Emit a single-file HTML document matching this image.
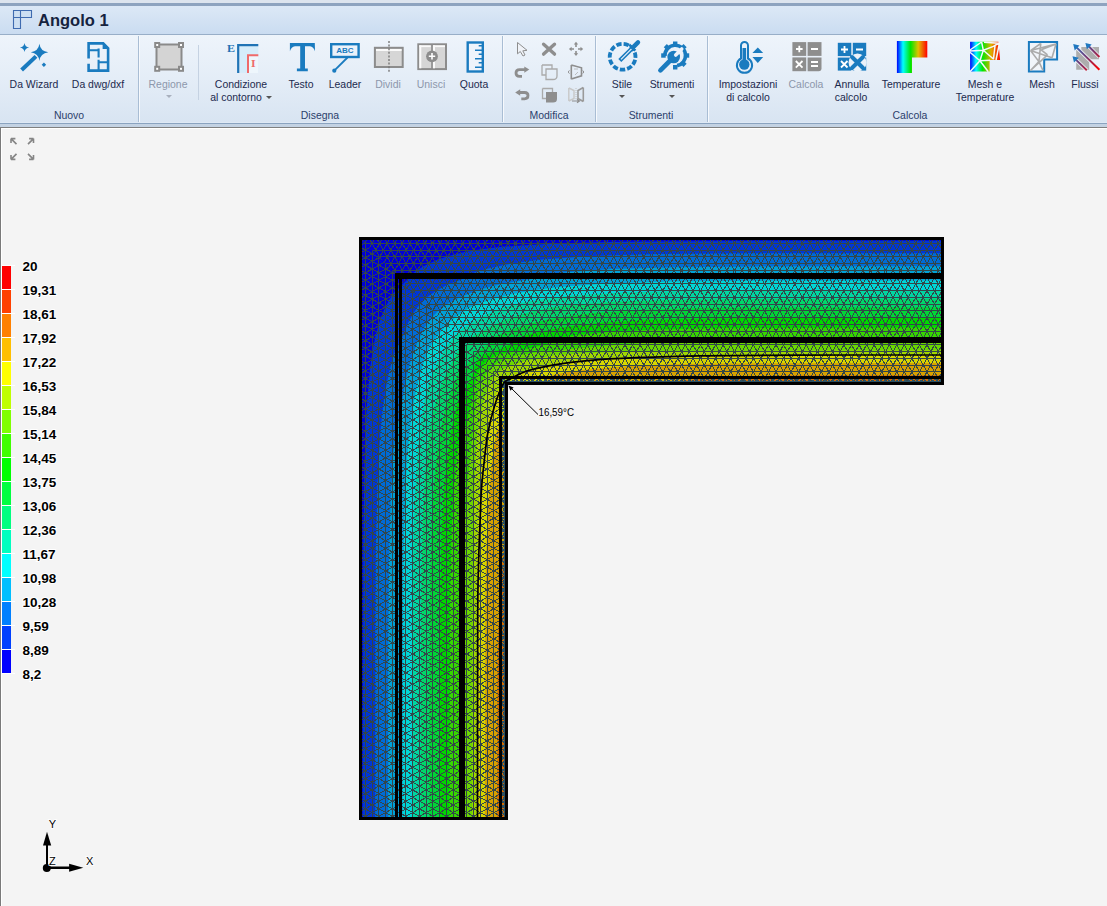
<!DOCTYPE html>
<html><head><meta charset="utf-8">
<style>
*{margin:0;padding:0;box-sizing:border-box}
html,body{width:1107px;height:906px;overflow:hidden;background:#f4f4f4;font-family:"Liberation Sans",sans-serif}
#top{position:absolute;left:0;top:0;width:1107px;height:3px;background:#dde4ee}
#tline{position:absolute;left:0;top:3px;width:1107px;height:3px;background:#8ea3bf}
#title{position:absolute;left:0;top:6px;width:1107px;height:28px;background:linear-gradient(#dce8f6,#cadcf1)}
#tline2{position:absolute;left:0;top:34px;width:1107px;height:1px;background:#98aec8}
#ttext{position:absolute;left:38px;top:11.4px;font-size:16.5px;font-weight:bold;color:#15233f;white-space:nowrap}
#ribbon{position:absolute;left:0;top:35px;width:1107px;height:88px;background:linear-gradient(#eef4fb 0%,#e4edf7 50%,#d8e4f2 100%)}
#rb1{position:absolute;left:0;top:122px;width:1107px;height:1px;background:#dfe9f5}
#rb2{position:absolute;left:0;top:123px;width:1107px;height:1px;background:#8aa3c0}
#rb3{position:absolute;left:0;top:124px;width:1107px;height:3px;background:#c3d2e3}
#rb4{position:absolute;left:0;top:127px;width:1107px;height:1px;background:#7f7f7f}
#rb5{position:absolute;left:1px;top:128px;width:1106px;height:1px;background:#ffffff}
#lb{position:absolute;left:0;top:128px;width:1px;height:778px;background:#7a7a7a}
#lb2{position:absolute;left:1px;top:128px;width:1px;height:778px;background:#fff}
.sep{position:absolute;top:36px;width:1px;height:86px;background:#a9bdd4}
.sep2{position:absolute;top:36px;width:1px;height:86px;background:#f6f9fd}
.lbl{position:absolute;font-size:11px;color:#1c2a4e;white-space:nowrap;text-align:center;line-height:13px;transform:scaleX(0.95)}
.dis{color:#8d97ab}
.grp{position:absolute;top:109px;font-size:11px;color:#2b3e6b;white-space:nowrap;text-align:center;line-height:13px;transform:scaleX(0.95)}
.arr{position:absolute;width:0;height:0;border-left:3px solid transparent;border-right:3px solid transparent;border-top:3px solid #555}
svg{position:absolute;left:0;top:0}
.leg{position:absolute;left:22px;font-size:13.5px;font-weight:bold;color:#000;white-space:nowrap;line-height:14px;text-shadow:0 0 1px #fff,0 0 1px #fff}
</style></head><body>
<div id="top"></div><div id="tline"></div><div id="title"></div><div id="tline2"></div>
<div id="ttext">Angolo 1</div>
<svg width="40" height="34" style="left:0;top:0">
<path d="M13.5 10.5H31.5V17.5H20.5V28.5H13.5Z M20.5 10.5V17.5H13.5" fill="#cddff2" stroke="#3f6bb0" stroke-width="1.1"/>
</svg>
<div id="ribbon"></div><div id="rb1"></div><div id="rb2"></div><div id="rb3"></div><div id="rb4"></div><div id="rb5"></div>
<div id="lb"></div><div id="lb2"></div>
<div class="sep" style="left:138px"></div><div class="sep2" style="left:139px"></div>
<div class="sep" style="left:502px"></div><div class="sep2" style="left:503px"></div>
<div class="sep" style="left:595px"></div><div class="sep2" style="left:596px"></div>
<div class="sep" style="left:707px"></div><div class="sep2" style="left:708px"></div>
<div style="position:absolute;left:198px;top:45px;width:1px;height:55px;background:#c5d2e2"></div>
<div class="lbl" style="left:-16px;top:78px;width:100px">Da Wizard</div>
<div class="lbl" style="left:48px;top:78px;width:100px">Da dwg/dxf</div>
<div class="lbl dis" style="left:118px;top:78px;width:100px">Regione</div>
<div class="arr" style="left:166px;top:95px;border-top-color:#a8b0bd"></div>
<div class="lbl" style="left:191px;top:78px;width:100px">Condizione</div>
<div class="lbl" style="left:186px;top:91px;width:100px">al contorno</div>
<div class="arr" style="left:266px;top:96px"></div>
<div class="lbl" style="left:251px;top:78px;width:100px">Testo</div>
<div class="lbl" style="left:295px;top:78px;width:100px">Leader</div>
<div class="lbl dis" style="left:338px;top:78px;width:100px">Dividi</div>
<div class="lbl dis" style="left:381px;top:78px;width:100px">Unisci</div>
<div class="lbl" style="left:424px;top:78px;width:100px">Quota</div>
<div class="lbl" style="left:572px;top:78px;width:100px">Stile</div>
<div class="arr" style="left:619px;top:95px"></div>
<div class="lbl" style="left:622px;top:78px;width:100px">Strumenti</div>
<div class="arr" style="left:669px;top:95px"></div>
<div class="lbl" style="left:698px;top:78px;width:100px">Impostazioni</div>
<div class="lbl" style="left:698px;top:91px;width:100px">di calcolo</div>
<div class="lbl dis" style="left:756px;top:78px;width:100px">Calcola</div>
<div class="lbl" style="left:802px;top:78px;width:100px">Annulla</div>
<div class="lbl" style="left:801px;top:91px;width:100px">calcolo</div>
<div class="lbl" style="left:861px;top:78px;width:100px">Temperature</div>
<div class="lbl" style="left:935px;top:78px;width:100px">Mesh e</div>
<div class="lbl" style="left:935px;top:91px;width:100px">Temperature</div>
<div class="lbl" style="left:992px;top:78px;width:100px">Mesh</div>
<div class="lbl" style="left:1035px;top:78px;width:100px">Flussi</div>
<div class="grp" style="left:19px;width:100px">Nuovo</div>
<div class="grp" style="left:270px;width:100px">Disegna</div>
<div class="grp" style="left:499px;width:100px">Modifica</div>
<div class="grp" style="left:601px;width:100px">Strumenti</div>
<div class="grp" style="left:860px;width:100px">Calcola</div>
<svg width="1107" height="128" style="left:0;top:0">
<defs>
<linearGradient id="tg" x1="0" x2="1" y1="0" y2="0">
<stop offset="0" stop-color="#0000ff"/><stop offset="0.2" stop-color="#00ffff"/><stop offset="0.45" stop-color="#00e600"/><stop offset="0.7" stop-color="#e0c000"/><stop offset="1" stop-color="#ff0000"/>
</linearGradient>
<linearGradient id="tg2" x1="0" x2="1" y1="0" y2="0">
<stop offset="0" stop-color="#0000ff"/><stop offset="0.2" stop-color="#00ffff"/><stop offset="0.42" stop-color="#00e600"/><stop offset="0.7" stop-color="#e0b000"/><stop offset="1" stop-color="#ff0000"/>
</linearGradient>
<linearGradient id="fg" gradientUnits="userSpaceOnUse" x1="1074" y1="46" x2="1099" y2="70">
<stop offset="0" stop-color="#2f6fc0"/><stop offset="0.5" stop-color="#7a3a70"/><stop offset="1" stop-color="#ff0000"/>
</linearGradient>
</defs>
<g fill="#1a7bbf">
<!-- wand -->
<g fill="#1a7bbf">
<path d="M39.4 43.8Q40.3 51.2 48.3 52.2Q40.3 53.2 39.4 61Q38.5 53.2 30.8 52.2Q38.5 51.2 39.4 43.8Z"/>
<path d="M24.5 43Q25.1 47 29.1 47.5Q25.1 48 24.5 52Q23.9 48 19.9 47.5Q23.9 47 24.5 43Z"/>
<path d="M43.9 62.6L46.1 64.8L43.9 67L41.7 64.8Z"/>
<path d="M20.2 68.6L34.6 55L37.4 57.8L23 71.4Z"/>
</g>
<!-- dwg -->
<g fill="none" stroke="#1a7bbf" stroke-width="2.6">
<path d="M88.6 58.5V43.4H103.2L108.1 48.3V70.6H88.6V63.8"/>
<path d="M88.6 50.2H99.6M98.6 48.6V57.6M98.6 59.8V70M98.6 62.2H108" stroke-width="2.1"/>
</g>
<path d="M102.6 42.1L109.4 48.9H102.6Z" fill="#1a7bbf"/>
<!-- regione -->
<rect x="156.5" y="44.5" width="25" height="25" fill="#d4d4d4" stroke="#8a8a8a" stroke-width="2"/>
<g fill="#fff" stroke="#8a8a8a" stroke-width="2">
<rect x="155.2" y="43" width="4" height="4"/><rect x="179" y="43" width="4" height="4"/>
<rect x="155.2" y="66.8" width="4" height="4"/><rect x="179" y="66.8" width="4" height="4"/>
</g>
<!-- condizione -->
<rect x="239.3" y="46.3" width="19" height="26.6" fill="#d5ecfa"/>
<rect x="249" y="56" width="9.3" height="17" fill="#eef6fc"/>
<path d="M238.2 72.9V45.2H258.3" fill="none" stroke="#1f73b5" stroke-width="2.2"/>
<path d="M248 72.9V55.2H258.3" fill="none" stroke="#ef6a6a" stroke-width="2"/>
<text x="226.9" y="51.8" font-family="Liberation Serif" font-weight="bold" font-size="11" textLength="8" lengthAdjust="spacingAndGlyphs" fill="#1f73b5">E</text>
<text x="250.9" y="66.9" font-family="Liberation Serif" font-weight="bold" font-size="10.5" textLength="4.6" lengthAdjust="spacingAndGlyphs" fill="#ef6a6a">I</text>
<!-- T -->
<path fill="#1a7bbf" d="M289.9 43H314.8L315 51.2Q313.5 46.8 310 46.3H305V68.5H307.8V71.2H296.9V68.5H300.2V46.3H295Q291.3 46.8 289.9 51.2Z"/>
<!-- leader -->
<rect x="331.2" y="44.2" width="27.4" height="12.8" fill="none" stroke="#1a7bbf" stroke-width="2.4"/>
<text x="336.3" y="53.4" font-family="Liberation Sans" font-weight="bold" font-size="8" fill="#1a7bbf">ABC</text>
<path d="M347.5 57.5L334.3 70.7" stroke="#1a7bbf" stroke-width="1.8"/>
<circle cx="334.3" cy="70.7" r="2.1" fill="#1a7bbf"/>
<!-- dividi -->
<rect x="374.9" y="47.8" width="27.8" height="19.2" fill="#d6d6d6" stroke="#8c8c8c" stroke-width="2"/>
<rect x="376" y="49" width="25.6" height="2" fill="#fafafa"/>
<path d="M389 41V73" stroke="#777" stroke-width="1.4" stroke-dasharray="2 1.6"/>
<!-- unisci -->
<rect x="418.3" y="44.3" width="27.7" height="24.8" fill="#d6d6d6" stroke="#8c8c8c" stroke-width="2"/>
<rect x="419.3" y="45.3" width="2" height="23" fill="#fafafa"/><rect x="419.3" y="45.3" width="11.5" height="1.8" fill="#fafafa"/>
<rect x="433" y="45.3" width="2" height="23" fill="#fafafa"/><rect x="433" y="45.3" width="12" height="1.8" fill="#fafafa"/>
<rect x="431.2" y="45" width="1.6" height="24" fill="#8c8c8c"/>
<circle cx="432" cy="56.3" r="5.9" fill="#8c8c8c"/>
<path d="M428.8 56.3H435.2M432 53.1V59.5" stroke="#fff" stroke-width="1.6"/>
<!-- quota -->
<rect x="467.7" y="42.5" width="15.1" height="29" fill="#eef4fb" stroke="#1a7bbf" stroke-width="2.4"/>
<path d="M475 50.2H482M475 58.8H482M475 67.3H482M478.7 45.8H482M478.7 54.3H482M478.7 62.8H482" stroke="#1a7bbf" stroke-width="1.4"/>
<!-- modifica -->
<g fill="none" stroke="#8e8e8e">
<path d="M517.5 42.5V53.8L520.3 51.5L523 56L525 55L522.8 50.8L527 50.3Z" stroke-width="1" fill="#f0f3f8"/>
<path d="M543.6 44.2L554.5 54.1M554.5 44.2L543.6 54.1" stroke-width="3.4" stroke-linecap="round"/>
<path d="M576 44V47M576 51V54M571 49H574M578 49H581" stroke-width="1.6"/>
<path d="M525 69.6H519.6Q516 69.6 516 73Q516 76.3 519.6 76.3H522" stroke-width="2.8"/>
<path d="M542 65V75H546M542 65H552V69" stroke-width="1.3" stroke="#aaa"/>
<path d="M546 69H557V76Q557 79.5 553 79.5H546Z" stroke-width="1.3" stroke="#aaa"/>
<path d="M571.3 65V79.3M571.3 65L581.5 67.8V75.8L571.3 79" stroke-width="1.6"/><path d="M569.5 70.5A1.6 1.6 0 0 0 569.5 73.5M582.6 70.5A1.6 1.6 0 0 1 582.6 73.5" stroke-width="1"/><path d="M574 69H578M575 75L578 72" stroke-width="0.8" stroke="#b0b0b0"/>
<path d="M519.5 92.5H524.6Q528 92.5 528 95.6Q528 98.8 524.6 98.8H521.3" stroke-width="2.8"/>
<path d="M542.5 88.5H552.5V92M542.5 88.5V98.5H546" stroke-width="1.3" stroke="#aaa"/>
<path d="M568.8 88V101M568.8 88L574 90.5V98.5L568.8 101" stroke-width="1.4" stroke="#c8c8c8"/><path d="M583.3 87.5V101.5M583.3 87.5L578 90.5V98.5L583.3 101.5" stroke-width="1.6" stroke="#9a9a9a"/><path d="M576 88V99" stroke-width="1" stroke="#c0c0c0" stroke-dasharray="1 1"/><path d="M572 101H579M577 99.3L579.5 101L577 102.7" stroke-width="1.1" stroke="#8e8e8e"/>
</g>
<g fill="#8e8e8e">
<path d="M576 41.8L578.2 44.5H573.8Z M576 56L578.2 53.3H573.8Z M568.9 49L571.6 46.8V51.2Z M583.2 49L580.5 46.8V51.2Z"/>
<path d="M524.3 66.4L529.3 69.6L524.3 72.8Z"/>
<path d="M515.2 92.5L520.2 89.3V95.7Z"/>
<path d="M546 92H557V99Q557 102.6 553 102.6H546Z"/>
</g>
<!-- stile -->
<circle cx="622.6" cy="56.8" r="12.9" fill="none" stroke="#1a7bbf" stroke-width="3.8" stroke-dasharray="5.3 2" transform="rotate(-52 622.6 56.8)"/>
<path d="M619.8 60.6L633.5 46.9" stroke="#1a7bbf" stroke-width="4.2"/>
<path d="M621 59.4L631.5 48.9" stroke="#eaf1f9" stroke-width="1.3"/>
<path d="M634 46.4L638 42.4" stroke="#1a7bbf" stroke-width="4.4" stroke-linecap="round"/>
<path d="M629.3 44.7L635.3 50.7" stroke="#1a7bbf" stroke-width="2.6"/>
<!-- strumenti -->
<g transform="translate(675.2 55.5)">
<circle r="10.3" fill="none" stroke="#1a7bbf" stroke-width="3.6" stroke-dasharray="47 17.7" transform="rotate(176)"/>
<g fill="#1a7bbf">
<rect x="-2.2" y="-14" width="4.4" height="4.5"/>
<rect x="-2.2" y="-14" width="4.4" height="4.5" transform="rotate(45)"/>
<rect x="-2.2" y="-14" width="4.4" height="4.5" transform="rotate(90)"/>
<rect x="-2.2" y="-14" width="4.4" height="4.5" transform="rotate(135)"/>
<rect x="-2.2" y="-14" width="4.4" height="4.5" transform="rotate(180)"/>
<rect x="-2.2" y="-14" width="4.4" height="4.5" transform="rotate(-45)"/>
<rect x="-2.2" y="-14" width="4.4" height="4.5" transform="rotate(-90)"/>
</g>
<path d="M-14.8 14.8L-3 3" stroke="#1a7bbf" stroke-width="4.6" stroke-linecap="round"/>
<circle cx="-1.5" cy="1.5" r="6.3" fill="#1a7bbf"/>
<path d="M0.5 -0.5L6.5 -6.5" stroke="#ecf2fa" stroke-width="3.6" stroke-linecap="round"/>
</g>
<!-- thermometer -->
<path d="M741 45.5A3.5 3.5 0 0 1 748 45.5V58.5A7.6 7.6 0 1 1 741 58.5Z" fill="none" stroke="#1a7bbf" stroke-width="2"/>
<circle cx="744.3" cy="64.5" r="5.2" fill="#1a7bbf"/>
<rect x="742.5" y="48" width="3.6" height="15" fill="#1a7bbf"/>
<path d="M752.4 52.9L757.8 47.5L763.2 52.9Z M752.4 57L757.8 63.1L763.2 57Z" fill="#1a7bbf"/>
<!-- calcola -->
<g fill="#8e8e8e">
<rect x="792.4" y="42.1" width="13.8" height="13.8"/><rect x="807.6" y="42.1" width="13.9" height="13.8"/>
<rect x="792.4" y="57.4" width="13.8" height="13.8"/><path d="M807.6 57.4H821.5V68.2Q821.5 71.2 818.5 71.2H807.6Z"/>
</g>
<g stroke="#fff" stroke-width="1.8">
<path d="M796 49H802.6M799.3 45.7V52.3M811 49H818M795.8 61L802.5 67.6M802.5 61L795.8 67.6M811 62H818M811 66H818"/>
</g>
<!-- annulla -->
<g fill="#1a7bbf">
<rect x="837.8" y="42.8" width="13.5" height="13.3"/><rect x="852.8" y="42.8" width="13.4" height="13.3"/>
<rect x="837.8" y="57.6" width="13.5" height="13"/><rect x="852.8" y="57.6" width="13.4" height="13"/>
</g>
<g stroke="#fff" stroke-width="1.8">
<path d="M841 49.5H848M844.5 46V53M856 49.5H863M841 61L847.5 67.5M847.5 61L841 67.5"/>
</g>
<circle cx="857.5" cy="62.5" r="9" fill="#eaf1f9"/>
<path d="M852 57L863 68M863 57L852 68" stroke="#1a7bbf" stroke-width="4" stroke-linecap="round"/>
<!-- temperature -->
<path d="M896.9 40.9H927.3V57.6H912V72.9H896.9Z" fill="url(#tg)"/>
<!-- mesh e temp -->
<path d="M970.1 41.8H998.4L1000.1 60H989.6V71.6H970.1Z" fill="url(#tg2)"/>
<path d="M970 50L981.6 42M970 51L983.3 50.2L981.6 42M983.3 50.2L993.4 46.4L999 43M984 42.3L998.5 43.3M983.3 50.2L993.4 59M983.3 50.2L979.9 60.7M970 52.3L979.9 60.7L970 71.8M979.9 60.7L988.3 71.8M979.9 60.7L990 60.2M995 46L993.4 59.5M999.5 43L996 60" stroke="#f4f8fc" stroke-width="1.5" fill="none"/>
<!-- mesh -->
<path d="M1028.9 42.1H1057.1V59.4H1044.2V71.6H1028.9Z" fill="#f1f5fa" stroke="#1a7bbf" stroke-width="2"/>
<path d="M1030.5 50.6L1040.8 43.5M1030.5 50.6L1056 44M1040.8 43.5L1038.9 61.6M1030.5 50.6L1052 57.7M1056 44L1052 57.7M1041.2 49.8L1056 44M1030.5 50.6L1038.9 61.6L1030.5 70.5M1038.9 61.6L1043 70.5M1030.5 70.5L1047.5 54.9M1041.2 49.8L1047.5 54.9" stroke="#ababab" stroke-width="1.6" fill="none"/>
<!-- flussi -->
<path d="M1081.3 47H1099V59.2H1089.2V69.8H1076.2V49.8H1081.3Z" fill="#adadad"/>
<g stroke="#f0f4f9" stroke-width="3.6">
<path d="M1075.5 46.4L1099.4 69.8M1087.7 45.2L1099.4 57M1074.8 58.6L1086.8 70.2"/>
</g>
<g stroke="url(#fg)" stroke-width="2">
<path d="M1075.5 46.4L1099.4 69.8M1087.7 45.2L1099.4 57M1074.8 58.6L1086.8 70.2"/>
</g>
<path d="M1073.2 44.1L1079.5 45.6L1074.7 50.4Z M1085.4 42.9L1091.7 44.4L1086.9 49.2Z M1072.5 56.3L1078.8 57.8L1074 62.6Z" fill="#1f78c0"/>
</svg>

<svg width="1107" height="906" style="left:0;top:0">
<defs>
<clipPath id="ch"><path d="M360 238H942V384H506Z"/></clipPath>
<clipPath id="cv"><path d="M360 238L506 384V818H360Z"/></clipPath>
</defs>
<path fill="#0000d6" d="M360 238H942V384H506V818H360Z"/>
<path fill="#0036d6" d="M505.5 817.5L362.7 817.5L363.3 546.5L364.5 463.5L366.7 407.5L370.3 366.5L372.8 349.5L375.5 335.9L379.3 322.5L383.5 311.2L388.8 300.5L394.5 291.7L400.5 286.8L404.3 282.5L408.8 278.5L413.7 272.5L423.5 266.3L435.5 260.5L448.5 256.0L463.5 252.3L482.5 249.1L504.5 246.6L553.5 243.5L622.5 241.8L733.5 240.9L941.5 240.7L941.5 383.5L506.5 383.5L505.5 384.5L505.5 817.5Z"/>
<path fill="#006bd6" d="M505.5 817.5L375.2 817.5L375.3 638.5L375.9 547.5L377.5 482.5L380.3 433.5L382.5 411.5L385.1 392.5L388.8 373.5L392.7 358.5L395.5 350.2L400.5 341.9L408.3 322.5L413.2 313.5L417.5 307.2L425.5 298.6L435.5 291.2L447.5 284.8L463.9 278.5L474.6 272.5L488.5 268.5L505.5 264.7L522.5 261.9L542.3 259.5L591.5 256.0L658.5 254.1L752.5 253.3L941.5 253.2L941.5 383.5L506.5 383.5L505.5 384.5L505.5 817.5Z"/>
<path fill="#00a1d6" d="M505.5 817.5L388.2 817.5L388.3 653.5L389 564.5L390.6 501.5L393.3 454.5L395.5 434.4L400.5 411.8L405.2 383.5L408.9 367.5L413.5 352.5L417.7 341.5L423.4 329.5L429.5 319.9L438.5 310.5L445.5 305.0L458.5 297.9L472.5 292.2L487.5 287.5L501.5 284.1L533.8 278.5L551.5 274.4L563.9 272.5L611.5 269.1L676.5 267.2L768.5 266.4L941.5 266.2L941.5 383.5L506.5 383.5L505.5 384.5L505.5 817.5Z"/>
<path fill="#00d6d6" d="M505.5 817.5L402.6 817.5L403.3 565.5L404.8 502.5L407.3 455.5L409.5 432.5L412.1 412.5L415.2 394.5L418.9 378.5L423.3 363.5L428.5 350.0L433.5 341.4L440 332.5L448.5 323.2L457.7 315.5L469.9 307.5L478.5 303.8L493.5 298.8L513.5 293.8L535.5 289.9L559.5 286.9L607.5 283.5L672.5 281.6L764.5 280.8L941.5 280.6L941.5 383.5L506.5 383.5L505.5 384.5L505.5 817.5Z"/>
<path fill="#00d6a1" d="M505.5 817.5L412 817.5L412.2 654.5L412.9 564.5L414.5 501.5L417.3 454.5L419.3 434.5L422.1 414.5L425.3 397.5L428.8 383.5L433.3 371.5L439.1 359.5L445.5 348.5L453.8 336.5L460.5 330.3L475.5 320.5L489.5 313.1L503.3 307.5L516.5 304.0L532.5 300.8L570.5 295.8L617.5 292.7L681.5 290.9L772.5 290.2L941.5 290.0L941.5 383.5L506.5 383.5L505.5 384.5L505.5 817.5Z"/>
<path fill="#00d66b" d="M505.5 817.5L420.7 817.5L420.9 658.5L421.6 571.5L423.1 509.5L425.7 463.5L429.5 429.3L432.5 414.5L436.1 400.5L440.3 387.5L445.2 375.5L451.7 362.5L458.5 350.8L459.5 349.7L465.5 346.0L468.8 342.5L471.7 337.5L472.8 336.5L486.5 328.6L502.5 321.0L517.5 315.6L533.5 311.2L551.3 307.5L568.5 305.3L615.5 301.8L679.5 299.8L770.5 299.0L941.5 298.7L941.5 383.5L506.5 383.5L505.5 384.5L505.5 817.5Z"/>
<path fill="#00d636" d="M505.5 817.5L429.2 817.5L429.4 658.5L430.1 577.5L431.9 516.5L435.1 470.5L437.8 447.5L441.1 427.5L445.3 409.5L450.5 392.5L454.2 382.5L458.5 373.0L459.5 371.7L465.5 367.0L471.5 359.1L474.5 354.0L476.5 352.1L481.1 349.5L489 343.5L493.7 337.5L495 336.5L512.5 329.2L529.5 323.8L547.5 319.5L568.5 315.9L590.5 313.2L636.5 310.0L698.5 308.1L780.5 307.4L941.5 307.2L941.5 383.5L506.5 383.5L505.5 384.5L505.5 817.5Z"/>
<path fill="#00d600" d="M505.5 817.5L439.4 817.5L439.6 669.5L440.3 586.5L441.8 527.5L444.5 482.5L446.7 460.5L449.7 439.5L452.7 422.5L456.3 407.5L459.5 397.8L464.5 392.1L471.5 377.1L475 365.5L477.5 360.2L483.8 354.5L499.1 349.5L512.2 343.5L514.1 342.5L519.8 337.5L522.5 336.3L537.5 332.3L554.5 328.8L576.5 325.5L598.5 323.0L644.5 320.0L704.5 318.4L789.5 317.6L941.5 317.4L941.5 383.5L506.5 383.5L505.5 384.5L505.5 817.5Z"/>
<path fill="#36d600" d="M505.5 817.5L449.5 817.5L450.3 588.5L451.7 529.5L454.2 484.5L456.8 457.5L459.5 440.3L464.5 429.2L465.5 425.9L471.5 403.0L476.5 376.4L478.7 371.5L484.4 363.5L491.5 358.0L495.6 355.5L498.4 354.5L525 349.5L547.9 343.5L551.2 342.5L562.3 337.5L578.5 334.9L605.5 332.3L650.5 329.8L710.5 328.3L941.5 327.5L941.5 383.5L506.5 383.5L505.5 384.5L505.5 817.5Z"/>
<path fill="#6bd600" d="M505.5 817.5L459 817.5L459.5 641.6L460.7 591.5L462.6 552.5L467.8 480.5L476.5 399.1L477.6 393.5L481.9 381.5L484.8 375.5L488.9 370.5L493.5 366.0L498.1 362.5L506.5 358.7L516.5 355.4L536.5 352.6L615.5 344.8L685.5 339.9L737.5 338.0L798.5 337.3L941.5 337.0L941.5 383.5L506.5 383.5L505.5 384.5L505.5 817.5Z"/>
<path fill="#a1d600" d="M505.5 817.5L472.3 817.5L472.9 564.5L473.8 503.5L475.5 457.5L477.5 430.8L482.7 404.5L484.5 397.3L487 390.5L492.1 379.5L495.5 374.0L499.5 371.1L509.5 366.3L516.2 363.5L524.5 361.2L552.8 355.5L578.5 353.6L624.5 351.8L686.5 350.9L941.5 350.3L941.5 383.5L506.5 383.5L505.5 384.5L505.5 817.5Z"/>
<path fill="#d6d600" d="M941.5 383.5L507.3 383.5L512.9 375.5L514.9 374.5L540.5 366.7L560.5 362.4L580.5 360.1L602.5 358.3L642.5 356.4L689.5 355.3L941.5 354.7L941.5 383.5ZM505.5 817.5L476.7 817.5L477.3 567.5L478.4 520.5L480.3 480.5L482.1 458.5L484.4 438.5L488.7 418.5L496.5 392.9L497.5 390.9L505.5 385.3L505.5 817.5Z"/>
<path fill="#d6a100" d="M941.5 383.5L543.7 383.5L551.4 375.5L554.5 374.5L571.5 371.5L589.5 369.2L633.5 365.8L673.5 364.3L723.5 363.4L941.5 362.9L941.5 383.5ZM505.5 817.5L484.9 817.5L485.4 600.5L486.3 550.5L487.8 511.5L491.2 467.5L493.5 449.5L496.5 432.5L497.5 429.4L505.5 421.7L505.5 817.5Z"/>
<path fill="#d66b00" d="M941.5 383.5L657 383.5L677.5 380.9L700.5 378.8L756.5 376.1L797.5 375.4L941.5 375.2L941.5 383.5ZM505.5 817.5L497.2 817.5L497.4 674.5L498.1 634.5L500.8 578.5L502.9 555.5L505.5 535.0L505.5 817.5Z"/>
<g stroke="#334649" stroke-width="1" fill="none" shape-rendering="crispEdges">
<path clip-path="url(#ch)" d="M360 243.5H942M360 250.5H942M360 256.5H942M360 263.5H942M360 270.5H942M360 277.5H942M360 283.5H942M360 290.5H942M360 297.5H942M360 304.5H942M360 310.5H942M360 317.5H942M360 324.5H942M360 331.5H942M360 338.5H942M360 344.5H942M360 351.5H942M360 358.5H942M360 365.5H942M360 371.5H942M360 378.5H942M270.9 238l81.5 146M352.5 238l-81.5 146M278.5 238l81.5 146M360.0 238l-81.5 146M286.0 238l81.5 146M367.6 238l-81.5 146M293.6 238l81.5 146M375.1 238l-81.5 146M301.1 238l81.5 146M382.7 238l-81.5 146M308.7 238l81.5 146M390.2 238l-81.5 146M316.2 238l81.5 146M397.8 238l-81.5 146M323.8 238l81.5 146M405.3 238l-81.5 146M331.3 238l81.5 146M412.9 238l-81.5 146M338.9 238l81.5 146M420.4 238l-81.5 146M346.4 238l81.5 146M428.0 238l-81.5 146M354.0 238l81.5 146M435.5 238l-81.5 146M361.5 238l81.5 146M443.1 238l-81.5 146M369.1 238l81.5 146M450.6 238l-81.5 146M376.6 238l81.5 146M458.2 238l-81.5 146M384.2 238l81.5 146M465.7 238l-81.5 146M391.7 238l81.5 146M473.3 238l-81.5 146M399.3 238l81.5 146M480.8 238l-81.5 146M406.8 238l81.5 146M488.4 238l-81.5 146M414.4 238l81.5 146M495.9 238l-81.5 146M421.9 238l81.5 146M503.5 238l-81.5 146M429.5 238l81.5 146M511.0 238l-81.5 146M437.0 238l81.5 146M518.6 238l-81.5 146M444.6 238l81.5 146M526.1 238l-81.5 146M452.1 238l81.5 146M533.7 238l-81.5 146M459.7 238l81.5 146M541.2 238l-81.5 146M467.2 238l81.5 146M548.8 238l-81.5 146M474.8 238l81.5 146M556.3 238l-81.5 146M482.3 238l81.5 146M563.9 238l-81.5 146M489.9 238l81.5 146M571.4 238l-81.5 146M497.4 238l81.5 146M579.0 238l-81.5 146M505.0 238l81.5 146M586.5 238l-81.5 146M512.5 238l81.5 146M594.1 238l-81.5 146M520.1 238l81.5 146M601.6 238l-81.5 146M527.6 238l81.5 146M609.2 238l-81.5 146M535.2 238l81.5 146M616.7 238l-81.5 146M542.7 238l81.5 146M624.3 238l-81.5 146M550.3 238l81.5 146M631.8 238l-81.5 146M557.8 238l81.5 146M639.4 238l-81.5 146M565.4 238l81.5 146M646.9 238l-81.5 146M572.9 238l81.5 146M654.4 238l-81.5 146M580.5 238l81.5 146M662.0 238l-81.5 146M588.0 238l81.5 146M669.5 238l-81.5 146M595.6 238l81.5 146M677.1 238l-81.5 146M603.1 238l81.5 146M684.6 238l-81.5 146M610.7 238l81.5 146M692.2 238l-81.5 146M618.2 238l81.5 146M699.7 238l-81.5 146M625.8 238l81.5 146M707.3 238l-81.5 146M633.3 238l81.5 146M714.8 238l-81.5 146M640.9 238l81.5 146M722.4 238l-81.5 146M648.4 238l81.5 146M729.9 238l-81.5 146M656.0 238l81.5 146M737.5 238l-81.5 146M663.5 238l81.5 146M745.0 238l-81.5 146M671.1 238l81.5 146M752.6 238l-81.5 146M678.6 238l81.5 146M760.1 238l-81.5 146M686.2 238l81.5 146M767.7 238l-81.5 146M693.7 238l81.5 146M775.2 238l-81.5 146M701.3 238l81.5 146M782.8 238l-81.5 146M708.8 238l81.5 146M790.3 238l-81.5 146M716.4 238l81.5 146M797.9 238l-81.5 146M723.9 238l81.5 146M805.4 238l-81.5 146M731.5 238l81.5 146M813.0 238l-81.5 146M739.0 238l81.5 146M820.5 238l-81.5 146M746.6 238l81.5 146M828.1 238l-81.5 146M754.1 238l81.5 146M835.6 238l-81.5 146M761.7 238l81.5 146M843.2 238l-81.5 146M769.2 238l81.5 146M850.7 238l-81.5 146M776.8 238l81.5 146M858.3 238l-81.5 146M784.3 238l81.5 146M865.8 238l-81.5 146M791.9 238l81.5 146M873.4 238l-81.5 146M799.4 238l81.5 146M880.9 238l-81.5 146M807.0 238l81.5 146M888.5 238l-81.5 146M814.5 238l81.5 146M896.0 238l-81.5 146M822.1 238l81.5 146M903.6 238l-81.5 146M829.6 238l81.5 146M911.1 238l-81.5 146M837.2 238l81.5 146M918.7 238l-81.5 146M844.7 238l81.5 146M926.2 238l-81.5 146M852.3 238l81.5 146M933.8 238l-81.5 146M859.8 238l81.5 146M941.3 238l-81.5 146M867.4 238l81.5 146M948.9 238l-81.5 146M874.9 238l81.5 146M956.4 238l-81.5 146M882.5 238l81.5 146M964.0 238l-81.5 146M890.0 238l81.5 146M971.5 238l-81.5 146M897.6 238l81.5 146M979.1 238l-81.5 146M905.1 238l81.5 146M986.6 238l-81.5 146M912.7 238l81.5 146M994.2 238l-81.5 146M920.2 238l81.5 146M1001.7 238l-81.5 146M927.8 238l81.5 146M1009.3 238l-81.5 146M935.3 238l81.5 146M1016.8 238l-81.5 146M942.9 238l81.5 146M1024.4 238l-81.5 146"/>
<path clip-path="url(#cv)" d="M365.5 238V818M372.5 238V818M378.5 238V818M385.5 238V818M392.5 238V818M399.5 238V818M405.5 238V818M412.5 238V818M419.5 238V818M426.5 238V818M432.5 238V818M439.5 238V818M446.5 238V818M453.5 238V818M460.5 238V818M466.5 238V818M473.5 238V818M480.5 238V818M487.5 238V818M493.5 238V818M500.5 238V818M360 148.9l146 81.5M360 230.4l146 -81.5M360 156.5l146 81.5M360 238.0l146 -81.5M360 164.0l146 81.5M360 245.6l146 -81.5M360 171.6l146 81.5M360 253.1l146 -81.5M360 179.1l146 81.5M360 260.7l146 -81.5M360 186.7l146 81.5M360 268.2l146 -81.5M360 194.2l146 81.5M360 275.8l146 -81.5M360 201.8l146 81.5M360 283.3l146 -81.5M360 209.3l146 81.5M360 290.9l146 -81.5M360 216.9l146 81.5M360 298.4l146 -81.5M360 224.4l146 81.5M360 306.0l146 -81.5M360 232.0l146 81.5M360 313.5l146 -81.5M360 239.5l146 81.5M360 321.1l146 -81.5M360 247.1l146 81.5M360 328.6l146 -81.5M360 254.6l146 81.5M360 336.2l146 -81.5M360 262.2l146 81.5M360 343.7l146 -81.5M360 269.7l146 81.5M360 351.3l146 -81.5M360 277.3l146 81.5M360 358.8l146 -81.5M360 284.8l146 81.5M360 366.4l146 -81.5M360 292.4l146 81.5M360 373.9l146 -81.5M360 299.9l146 81.5M360 381.5l146 -81.5M360 307.5l146 81.5M360 389.0l146 -81.5M360 315.0l146 81.5M360 396.6l146 -81.5M360 322.6l146 81.5M360 404.1l146 -81.5M360 330.1l146 81.5M360 411.7l146 -81.5M360 337.7l146 81.5M360 419.2l146 -81.5M360 345.2l146 81.5M360 426.8l146 -81.5M360 352.8l146 81.5M360 434.3l146 -81.5M360 360.3l146 81.5M360 441.9l146 -81.5M360 367.9l146 81.5M360 449.4l146 -81.5M360 375.4l146 81.5M360 457.0l146 -81.5M360 383.0l146 81.5M360 464.5l146 -81.5M360 390.5l146 81.5M360 472.1l146 -81.5M360 398.1l146 81.5M360 479.6l146 -81.5M360 405.6l146 81.5M360 487.2l146 -81.5M360 413.2l146 81.5M360 494.7l146 -81.5M360 420.7l146 81.5M360 502.3l146 -81.5M360 428.3l146 81.5M360 509.8l146 -81.5M360 435.8l146 81.5M360 517.4l146 -81.5M360 443.4l146 81.5M360 524.9l146 -81.5M360 450.9l146 81.5M360 532.5l146 -81.5M360 458.5l146 81.5M360 540.0l146 -81.5M360 466.0l146 81.5M360 547.6l146 -81.5M360 473.6l146 81.5M360 555.1l146 -81.5M360 481.1l146 81.5M360 562.7l146 -81.5M360 488.7l146 81.5M360 570.2l146 -81.5M360 496.2l146 81.5M360 577.8l146 -81.5M360 503.8l146 81.5M360 585.3l146 -81.5M360 511.3l146 81.5M360 592.9l146 -81.5M360 518.9l146 81.5M360 600.4l146 -81.5M360 526.4l146 81.5M360 608.0l146 -81.5M360 534.0l146 81.5M360 615.5l146 -81.5M360 541.5l146 81.5M360 623.1l146 -81.5M360 549.1l146 81.5M360 630.6l146 -81.5M360 556.6l146 81.5M360 638.2l146 -81.5M360 564.2l146 81.5M360 645.7l146 -81.5M360 571.7l146 81.5M360 653.3l146 -81.5M360 579.3l146 81.5M360 660.8l146 -81.5M360 586.8l146 81.5M360 668.4l146 -81.5M360 594.4l146 81.5M360 675.9l146 -81.5M360 601.9l146 81.5M360 683.4l146 -81.5M360 609.5l146 81.5M360 691.0l146 -81.5M360 617.0l146 81.5M360 698.5l146 -81.5M360 624.6l146 81.5M360 706.1l146 -81.5M360 632.1l146 81.5M360 713.6l146 -81.5M360 639.7l146 81.5M360 721.2l146 -81.5M360 647.2l146 81.5M360 728.7l146 -81.5M360 654.8l146 81.5M360 736.3l146 -81.5M360 662.3l146 81.5M360 743.8l146 -81.5M360 669.9l146 81.5M360 751.4l146 -81.5M360 677.4l146 81.5M360 758.9l146 -81.5M360 685.0l146 81.5M360 766.5l146 -81.5M360 692.5l146 81.5M360 774.0l146 -81.5M360 700.1l146 81.5M360 781.6l146 -81.5M360 707.6l146 81.5M360 789.1l146 -81.5M360 715.2l146 81.5M360 796.7l146 -81.5M360 722.7l146 81.5M360 804.2l146 -81.5M360 730.3l146 81.5M360 811.8l146 -81.5M360 737.8l146 81.5M360 819.3l146 -81.5M360 745.4l146 81.5M360 826.9l146 -81.5M360 752.9l146 81.5M360 834.4l146 -81.5M360 760.5l146 81.5M360 842.0l146 -81.5M360 768.0l146 81.5M360 849.5l146 -81.5M360 775.6l146 81.5M360 857.1l146 -81.5M360 783.1l146 81.5M360 864.6l146 -81.5M360 790.7l146 81.5M360 872.2l146 -81.5M360 798.2l146 81.5M360 879.7l146 -81.5M360 805.8l146 81.5M360 887.3l146 -81.5M360 813.3l146 81.5M360 894.8l146 -81.5M360 820.9l146 81.5M360 902.4l146 -81.5"/>
</g>
<g fill="#2c5264" shape-rendering="crispEdges">
<rect x="502" y="381" width="439" height="1"/>
<rect x="504" y="379" width="1" height="438"/>
</g>
<path d="M502 379.5H941M502.5 379V817" stroke="#2c5264" stroke-width="1" stroke-dasharray="3 3" shape-rendering="crispEdges"/><path d="M504 380.5H941M503.5 381V817" stroke="#2c5264" stroke-width="1" stroke-dasharray="2 2" shape-rendering="crispEdges"/>
<g fill="#000" shape-rendering="crispEdges">
<rect x="359" y="237" width="585" height="3"/>
<rect x="359" y="237" width="3" height="583"/>
<rect x="941" y="237" width="3" height="148"/>
<rect x="359" y="817" width="149" height="3"/>
<rect x="505" y="382" width="439" height="3"/>
<rect x="505" y="382" width="3" height="438"/>
<rect x="499" y="376" width="442" height="3"/>
<rect x="499" y="376" width="3" height="441"/>
<rect x="459" y="337" width="482" height="6"/>
<rect x="459" y="337" width="6" height="480"/>
<rect x="395" y="273" width="546" height="6"/>
<rect x="395" y="273" width="3" height="544"/>
<rect x="399" y="277" width="3" height="540"/>
</g>
<path fill="none" stroke="#000" stroke-width="1.7" d="M477.5 820.0C477.5 786.3 477.5 660.4 477.7 618.0C477.9 575.6 478.1 583.0 478.5 565.4C478.9 547.8 479.9 525.7 480.4 512.5C480.9 499.3 481.0 494.8 481.7 486.0C482.4 477.2 483.4 468.3 484.4 459.5C485.4 450.7 486.1 441.8 487.8 433.0C489.5 424.2 492.0 414.4 494.4 406.5C496.8 398.6 500.2 389.7 502.4 385.3C504.6 380.9 506.4 381.0 507.8 379.9C509.2 378.8 507.8 379.9 511.0 378.4C514.2 376.9 519.8 373.3 527.0 371.0C534.2 368.7 543.5 366.6 554.0 364.8C564.5 363.0 576.5 361.5 590.0 360.3C603.5 359.1 616.7 358.4 635.0 357.6C653.3 356.9 672.5 356.2 700.0 355.8C727.5 355.4 759.7 355.2 800.0 355.1C840.3 355.0 918.3 355.0 942.0 355.0"/>
<path d="M510 387L538 414.5" stroke="#000" stroke-width="1"/>
<path d="M508.4 385.6L513.6 387.6L510.4 390.8Z" fill="#000"/>
<text x="538.5" y="416.2" font-family="Liberation Sans" font-size="10.2" textLength="35.5" lengthAdjust="spacingAndGlyphs" fill="#000">16,59°C</text>
<rect x="2" y="266" width="9" height="23" fill="#ff0000"/>
<rect x="2" y="289" width="13" height="1" fill="#fff"/>
<rect x="2" y="290" width="9" height="23" fill="#ff4000"/>
<rect x="2" y="313" width="13" height="1" fill="#fff"/>
<rect x="2" y="314" width="9" height="23" fill="#ff8000"/>
<rect x="2" y="337" width="13" height="1" fill="#fff"/>
<rect x="2" y="338" width="9" height="23" fill="#ffbf00"/>
<rect x="2" y="361" width="13" height="1" fill="#fff"/>
<rect x="2" y="362" width="9" height="23" fill="#ffff00"/>
<rect x="2" y="385" width="13" height="1" fill="#fff"/>
<rect x="2" y="386" width="9" height="23" fill="#bfff00"/>
<rect x="2" y="409" width="13" height="1" fill="#fff"/>
<rect x="2" y="410" width="9" height="23" fill="#80ff00"/>
<rect x="2" y="433" width="13" height="1" fill="#fff"/>
<rect x="2" y="434" width="9" height="23" fill="#40ff00"/>
<rect x="2" y="457" width="13" height="1" fill="#fff"/>
<rect x="2" y="458" width="9" height="23" fill="#00ff00"/>
<rect x="2" y="481" width="13" height="1" fill="#fff"/>
<rect x="2" y="482" width="9" height="23" fill="#00ff40"/>
<rect x="2" y="505" width="13" height="1" fill="#fff"/>
<rect x="2" y="506" width="9" height="23" fill="#00ff80"/>
<rect x="2" y="529" width="13" height="1" fill="#fff"/>
<rect x="2" y="530" width="9" height="23" fill="#00ffbf"/>
<rect x="2" y="553" width="13" height="1" fill="#fff"/>
<rect x="2" y="554" width="9" height="23" fill="#00ffff"/>
<rect x="2" y="577" width="13" height="1" fill="#fff"/>
<rect x="2" y="578" width="9" height="23" fill="#00bfff"/>
<rect x="2" y="601" width="13" height="1" fill="#fff"/>
<rect x="2" y="602" width="9" height="23" fill="#0080ff"/>
<rect x="2" y="625" width="13" height="1" fill="#fff"/>
<rect x="2" y="626" width="9" height="23" fill="#0040ff"/>
<rect x="2" y="649" width="13" height="1" fill="#fff"/>
<rect x="2" y="650" width="9" height="23" fill="#0000ff"/>
<rect x="2" y="673" width="13" height="1" fill="#fff"/>
<rect x="2" y="265" width="13" height="1" fill="#fff"/>
<text x="22.5" y="271" font-family="Liberation Sans" font-size="13.5" font-weight="bold" fill="#000" stroke="#fff" stroke-width="2" paint-order="stroke">20</text>
<text x="22.5" y="295" font-family="Liberation Sans" font-size="13.5" font-weight="bold" fill="#000" stroke="#fff" stroke-width="2" paint-order="stroke">19,31</text>
<text x="22.5" y="319" font-family="Liberation Sans" font-size="13.5" font-weight="bold" fill="#000" stroke="#fff" stroke-width="2" paint-order="stroke">18,61</text>
<text x="22.5" y="343" font-family="Liberation Sans" font-size="13.5" font-weight="bold" fill="#000" stroke="#fff" stroke-width="2" paint-order="stroke">17,92</text>
<text x="22.5" y="367" font-family="Liberation Sans" font-size="13.5" font-weight="bold" fill="#000" stroke="#fff" stroke-width="2" paint-order="stroke">17,22</text>
<text x="22.5" y="391" font-family="Liberation Sans" font-size="13.5" font-weight="bold" fill="#000" stroke="#fff" stroke-width="2" paint-order="stroke">16,53</text>
<text x="22.5" y="415" font-family="Liberation Sans" font-size="13.5" font-weight="bold" fill="#000" stroke="#fff" stroke-width="2" paint-order="stroke">15,84</text>
<text x="22.5" y="439" font-family="Liberation Sans" font-size="13.5" font-weight="bold" fill="#000" stroke="#fff" stroke-width="2" paint-order="stroke">15,14</text>
<text x="22.5" y="463" font-family="Liberation Sans" font-size="13.5" font-weight="bold" fill="#000" stroke="#fff" stroke-width="2" paint-order="stroke">14,45</text>
<text x="22.5" y="487" font-family="Liberation Sans" font-size="13.5" font-weight="bold" fill="#000" stroke="#fff" stroke-width="2" paint-order="stroke">13,75</text>
<text x="22.5" y="511" font-family="Liberation Sans" font-size="13.5" font-weight="bold" fill="#000" stroke="#fff" stroke-width="2" paint-order="stroke">13,06</text>
<text x="22.5" y="535" font-family="Liberation Sans" font-size="13.5" font-weight="bold" fill="#000" stroke="#fff" stroke-width="2" paint-order="stroke">12,36</text>
<text x="22.5" y="559" font-family="Liberation Sans" font-size="13.5" font-weight="bold" fill="#000" stroke="#fff" stroke-width="2" paint-order="stroke">11,67</text>
<text x="22.5" y="583" font-family="Liberation Sans" font-size="13.5" font-weight="bold" fill="#000" stroke="#fff" stroke-width="2" paint-order="stroke">10,98</text>
<text x="22.5" y="607" font-family="Liberation Sans" font-size="13.5" font-weight="bold" fill="#000" stroke="#fff" stroke-width="2" paint-order="stroke">10,28</text>
<text x="22.5" y="631" font-family="Liberation Sans" font-size="13.5" font-weight="bold" fill="#000" stroke="#fff" stroke-width="2" paint-order="stroke">9,59</text>
<text x="22.5" y="655" font-family="Liberation Sans" font-size="13.5" font-weight="bold" fill="#000" stroke="#fff" stroke-width="2" paint-order="stroke">8,89</text>
<text x="22.5" y="679" font-family="Liberation Sans" font-size="13.5" font-weight="bold" fill="#000" stroke="#fff" stroke-width="2" paint-order="stroke">8,2</text>
<g stroke="#858585" stroke-width="1.6" fill="none">
<path d="M11 138.6L16.5 144.1M11 138.6V143M11 138.6H15.4"/>
<path d="M33.5 138.6L28 144.1M33.5 138.6V143M33.5 138.6H29.1"/>
<path d="M11 159.4L16.5 153.9M11 159.4V155M11 159.4H15.4"/>
<path d="M33.5 159.4L28 153.9M33.5 159.4V155M33.5 159.4H29.1"/>
</g>
<g fill="#000">
<rect x="46" y="845" width="2" height="20"/>
<path d="M43 845.4L47 831.8L51.2 845.4Z"/>
<circle cx="46.8" cy="868" r="4"/>
<rect x="50" y="866.5" width="20" height="2.5"/>
<path d="M69.1 863.7L83.3 867.8L69.1 871.8Z"/>
</g>
<g font-family="Liberation Sans" font-size="11" fill="#000" stroke="#fff" stroke-width="1.5" paint-order="stroke">
<text x="48.8" y="828">Y</text><text x="49" y="864.5">Z</text><text x="86" y="865">X</text>
</g>

</svg>
</body></html>
